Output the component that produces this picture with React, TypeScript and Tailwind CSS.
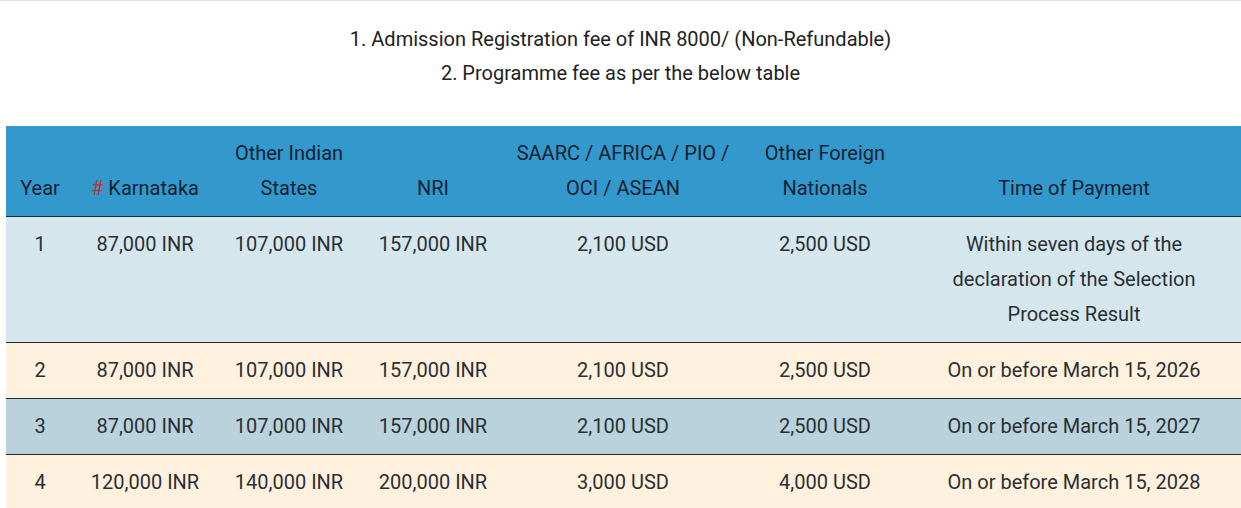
import React from "react";

const rows = [
  { y: "1", k: "87,000 INR", o: "107,000 INR", n: "157,000 INR", s: "2,100 USD", f: "2,500 USD", t: "Within seven days of the declaration of the Selection Process Result", bg: "bg-[#d5e7ed]" },
  { y: "2", k: "87,000 INR", o: "107,000 INR", n: "157,000 INR", s: "2,100 USD", f: "2,500 USD", t: "On or before March 15, 2026", bg: "bg-[#fff1de]" },
  { y: "3", k: "87,000 INR", o: "107,000 INR", n: "157,000 INR", s: "2,100 USD", f: "2,500 USD", t: "On or before March 15, 2027", bg: "bg-[#b9d2db]" },
  { y: "4", k: "120,000 INR", o: "140,000 INR", n: "200,000 INR", s: "3,000 USD", f: "4,000 USD", t: "On or before March 15, 2028", bg: "bg-[#fff1de]" },
];

export default function App() {
  return (
    <div className="w-[1241px] h-[508px] overflow-hidden bg-white border-t border-[#e2e2e2] text-[20px] leading-[34px] text-[#222]" style={{ fontFamily: "Roboto, 'Liberation Sans', sans-serif" }}>
      <div className="pt-[21px] text-center">
        <p>1. Admission Registration fee of INR 8000/ (Non-Refundable)</p>
        <p>2. Programme fee as per the below table</p>
      </div>
      <div className="mt-[36px] pl-[6px]">
        <table className="w-[1240px] table-fixed border-collapse text-center leading-[35px]">
          <colgroup>
            <col className="w-[68px]" />
            <col className="w-[142px]" />
            <col className="w-[146px]" />
            <col className="w-[142px]" />
            <col className="w-[238px]" />
            <col className="w-[166px]" />
            <col className="w-[338px]" />
          </colgroup>
          <thead>
            <tr className="bg-[#3399cc] text-[#0f2233] border-b border-[#1d2b33]">
              <th className="font-normal align-bottom py-[10px]">Year</th>
              <th className="font-normal align-bottom py-[10px] whitespace-nowrap"><span className="text-[#b5383a]">#</span> Karnataka</th>
              <th className="font-normal align-bottom py-[10px]">Other Indian<br />States</th>
              <th className="font-normal align-bottom py-[10px]">NRI</th>
              <th className="font-normal align-bottom py-[10px]">SAARC / AFRICA / PIO /<br />OCI / ASEAN</th>
              <th className="font-normal align-bottom py-[10px]">Other Foreign<br />Nationals</th>
              <th className="font-normal align-bottom py-[10px] pr-[6px]">Time of Payment</th>
            </tr>
          </thead>
          <tbody>
            {rows.map((r) => (
              <tr key={r.y} className={`${r.bg} border-b border-[#1d2b33] text-[#2a2f33]`}>
                <td className="align-top py-[10px]">{r.y}</td>
                <td className="align-top py-[10px] whitespace-nowrap">{r.k}</td>
                <td className="align-top py-[10px] whitespace-nowrap">{r.o}</td>
                <td className="align-top py-[10px] whitespace-nowrap">{r.n}</td>
                <td className="align-top py-[10px]">{r.s}</td>
                <td className="align-top py-[10px]">{r.f}</td>
                <td className="align-top py-[10px] pl-[37px] pr-[43px]">{r.t}</td>
              </tr>
            ))}
          </tbody>
        </table>
      </div>
    </div>
  );
}
